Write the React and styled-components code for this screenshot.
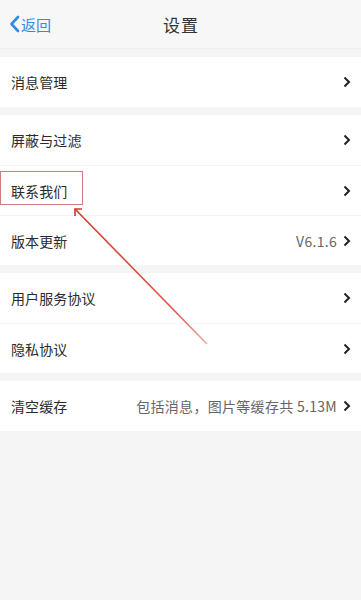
import React from "react";
import styled, { createGlobalStyle } from "styled-components";

const Global = createGlobalStyle`
  html, body { margin: 0; padding: 0; background: #f5f5f6; }
  body { font-family: "Noto Sans CJK SC", "Noto Sans", sans-serif; }
`;

const Page = styled.div`
  position: relative;
  width: 361px;
  min-height: 600px;
  background: #f5f5f6;
  display: flex;
  flex-direction: column;
  gap: 8px;
`;

const Header = styled.div`
  height: 49px;
  background: #f7f7f7;
  display: grid;
  grid-template-columns: 1fr auto 1fr;
  align-items: center;
  padding: 0 8px 0 9px;
  border-bottom: 1px solid #eeeeee;
  box-sizing: border-box;
`;

const Back = styled.div`
  display: flex;
  align-items: center;
  gap: 1px;
  color: #2f8de4;
  font-size: 15px;
`;

const Title = styled.div`
  font-size: 17px;
  color: #333;
  letter-spacing: 1px;
`;

const Group = styled.div`
  background: #fff;
  display: flex;
  flex-direction: column;
`;

const Row = styled.div`
  height: 50px;
  display: flex;
  align-items: center;
  padding: 0 10px 0 11px;
  box-sizing: border-box;
  & + & { border-top: 1px solid #f4f4f4; }
`;

const Label = styled.div`
  flex: 1;
  font-size: 14px;
  color: #2b2b2b;
  letter-spacing: 0.1px;
`;

const Value = styled.div`
  font-size: 14px;
  color: #666;
  margin-right: 6px;
  letter-spacing: 0.3px;
`;

const Highlight = styled.span`
  position: relative;
  &::before {
    content: "";
    position: absolute;
    left: -11px;
    top: -10px;
    width: 81px;
    height: 32px;
    border: 1px solid #d27a76;
  }
`;

const Overlay = styled.svg`
  position: absolute;
  left: 0;
  top: 0;
  pointer-events: none;
`;

const Chevron = () => (
  <svg width="8" height="12" viewBox="0 0 8 12">
    <polyline points="1.5,1.5 6,6 1.5,10.5" fill="none" stroke="#222" strokeWidth="2" />
  </svg>
);

const BackIcon = () => (
  <svg width="11" height="18" viewBox="0 0 11 18">
    <polyline points="9,2 2.5,9 9,16" fill="none" stroke="#2f8de4" strokeWidth="2.6" strokeLinecap="round" strokeLinejoin="round" />
  </svg>
);

const Item = ({ label, value, children }) => (
  <Row>
    <Label>{children || label}</Label>
    {value && <Value>{value}</Value>}
    <Chevron />
  </Row>
);

export default function App() {
  return (
    <>
      <Global />
      <Page>
        <Header>
          <Back>
            <BackIcon />
            <span>返回</span>
          </Back>
          <Title>设置</Title>
          <span />
        </Header>
        <Group>
          <Item label="消息管理" />
        </Group>
        <Group>
          <Item label="屏蔽与过滤" />
          <Item>
            <Highlight>联系我们</Highlight>
          </Item>
          <Item label="版本更新" value="V6.1.6" />
        </Group>
        <Group>
          <Item label="用户服务协议" />
          <Item label="隐私协议" />
        </Group>
        <Group>
          <Item label="清空缓存" value="包括消息，图片等缓存共 5.13M" />
        </Group>
        <Overlay width="361" height="600" viewBox="0 0 361 600">
          <defs>
            <linearGradient id="fade" x1="75" y1="209" x2="208" y2="345" gradientUnits="userSpaceOnUse">
              <stop offset="0" stopColor="#d23a2e" />
              <stop offset="0.75" stopColor="#d65a50" />
              <stop offset="1" stopColor="#eab0ab" />
            </linearGradient>
          </defs>
          <line x1="75" y1="209" x2="207" y2="344" stroke="url(#fade)" strokeWidth="1.6" />
          <polyline points="75,216 75,209 82,209" fill="none" stroke="#d23a2e" strokeWidth="1.6" />
        </Overlay>
      </Page>
    </>
  );
}
